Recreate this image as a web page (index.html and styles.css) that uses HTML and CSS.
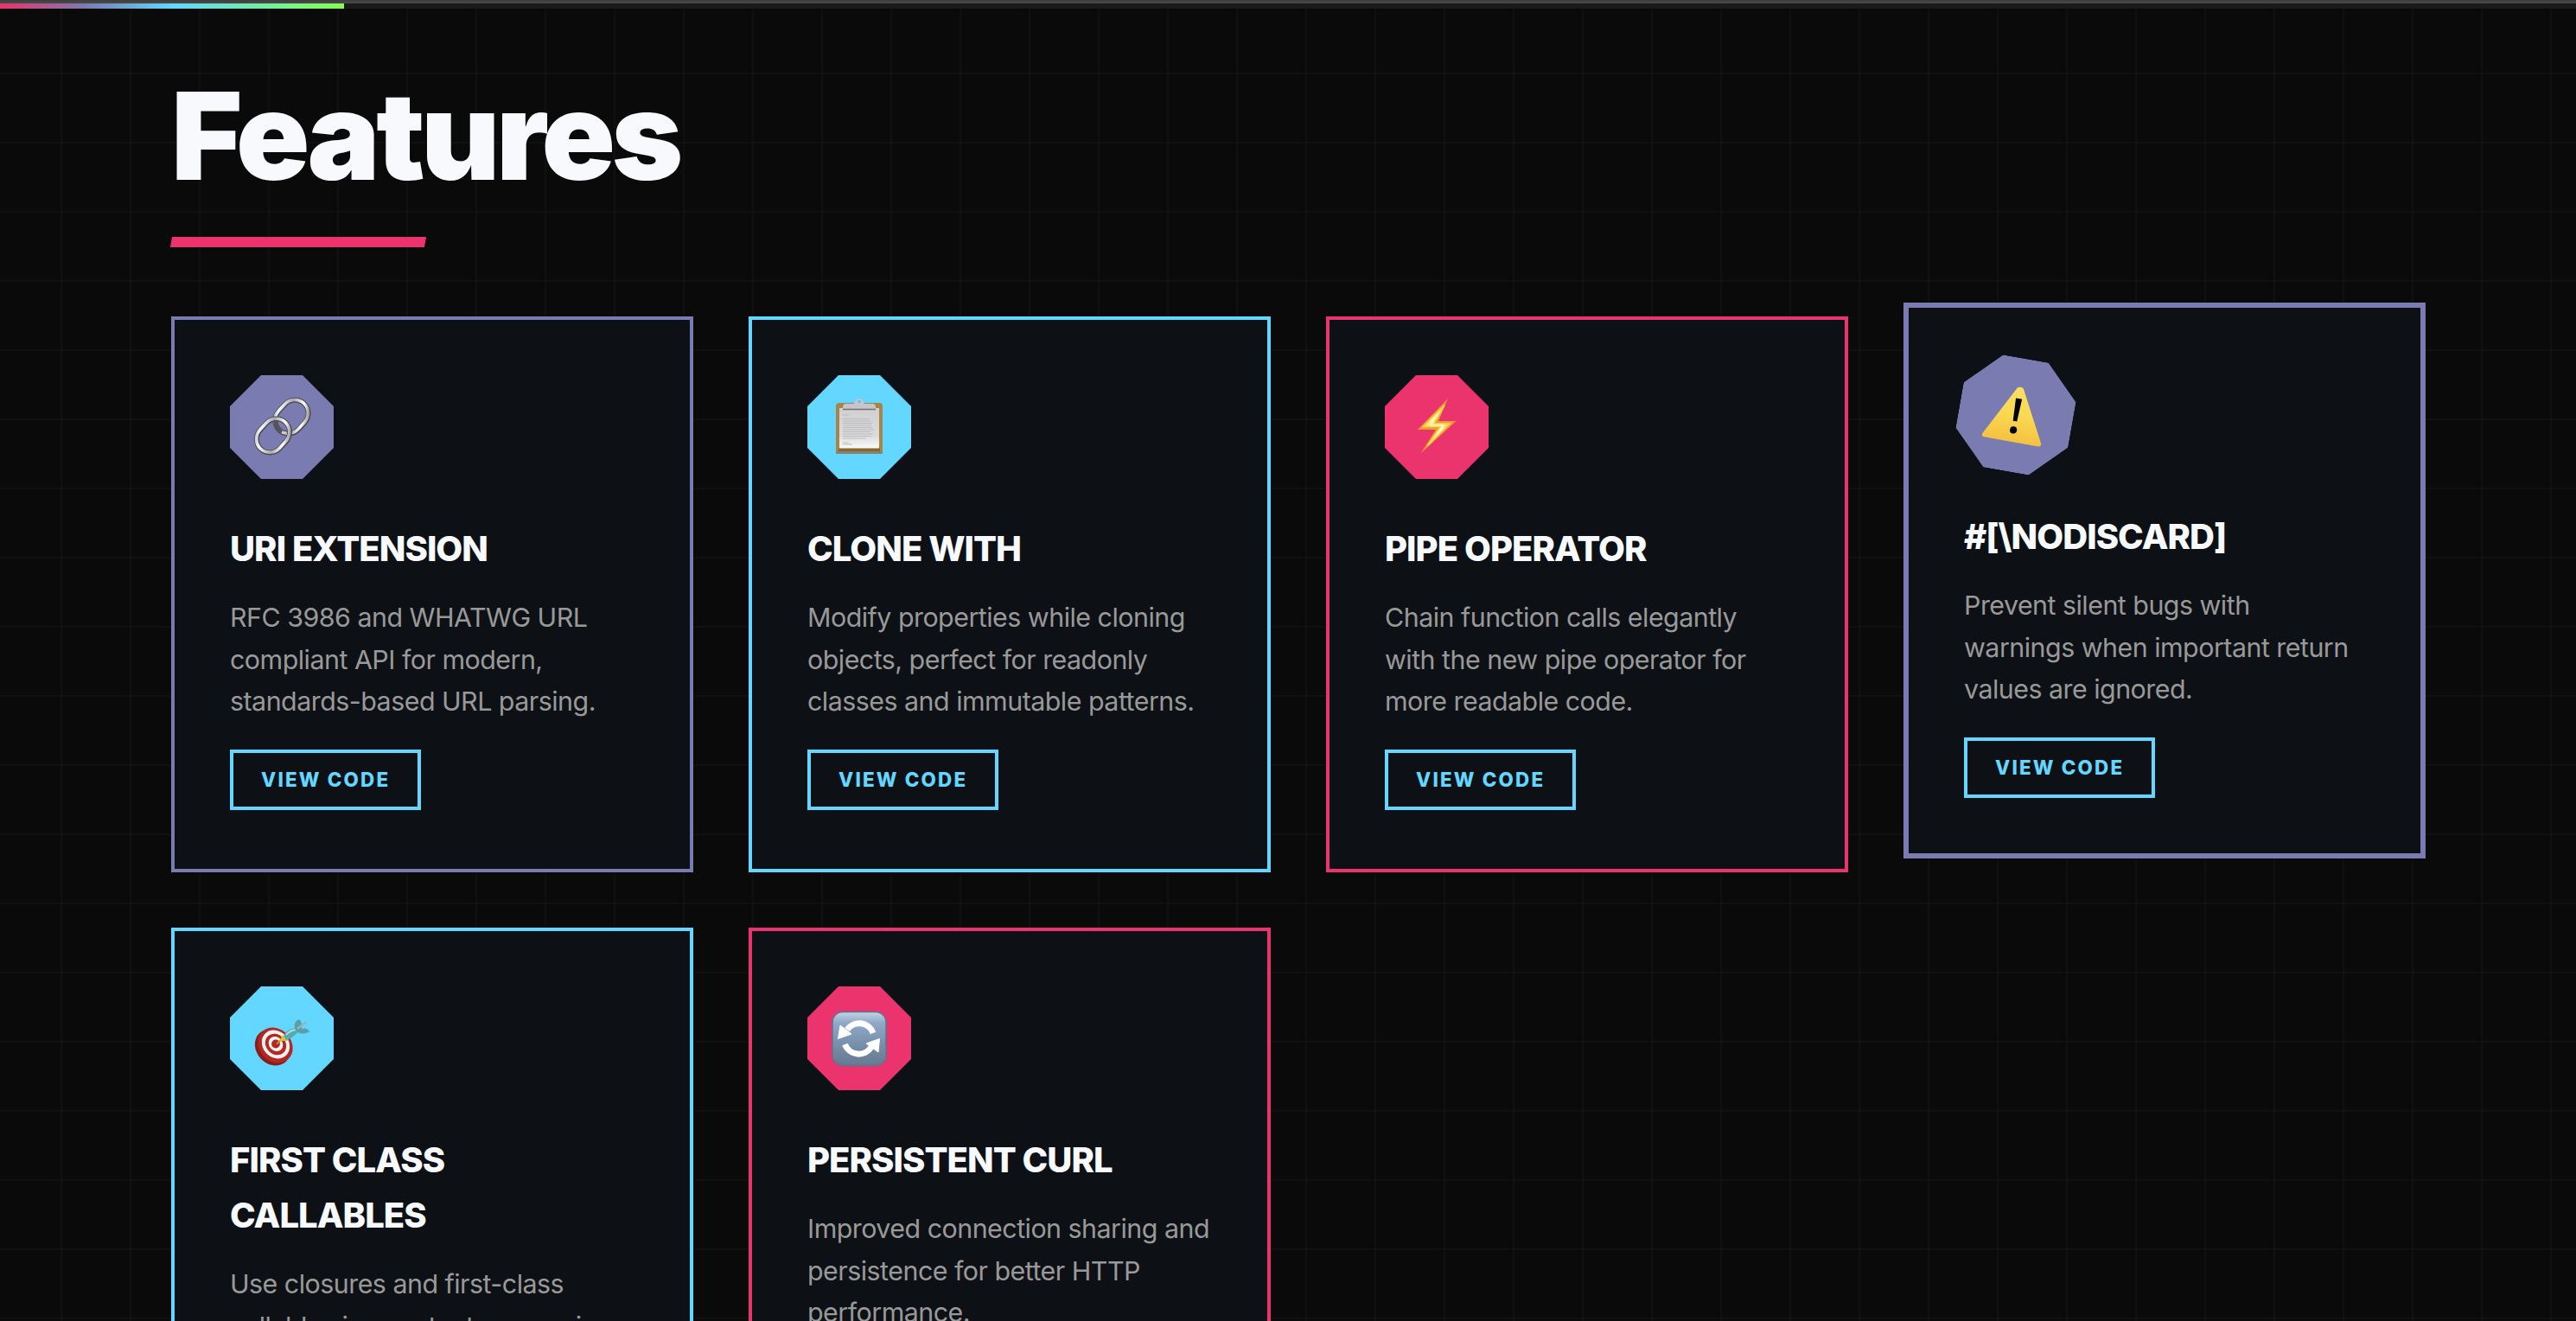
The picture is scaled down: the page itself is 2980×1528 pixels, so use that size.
FILE: index.html
```html
<!DOCTYPE html>
<html lang="en">
<head>
<meta charset="utf-8">
<title>Features</title>
<link rel="stylesheet" href="styles.css">
</head>
<body>
<div class="topline"></div>
<div class="progress"><div class="progress-fill"></div></div>
<main class="features">
  <h2 class="section-title">Features</h2>
  <div class="grid">
    <article class="card purple">
      <div class="icon">
        <svg viewBox="0 0 120 120">
          <defs><linearGradient id="metal" x1="0" y1="0" x2="1" y2="1"><stop offset="0" stop-color="#8f98a8"/><stop offset=".2" stop-color="#f8fbfd"/><stop offset=".5" stop-color="#a5a7ae"/><stop offset=".75" stop-color="#ffffff"/><stop offset="1" stop-color="#5a5459"/></linearGradient></defs>
          <g fill="none">
            <rect x="-21" y="-15.500" width="42" height="31" rx="16" transform="translate(71.500 48.200) rotate(-47)" stroke="#504c54" stroke-width="6"/>
            <rect x="-21" y="-15.500" width="42" height="31" rx="16" transform="translate(71.200 47.900) rotate(-47)" stroke="url(#metal)" stroke-width="3.600"/>
            <rect x="-21" y="-15.500" width="42" height="31" rx="16" transform="translate(50 70) rotate(-47)" stroke="#504c54" stroke-width="6"/>
            <rect x="-21" y="-15.500" width="42" height="31" rx="16" transform="translate(49.700 69.700) rotate(-47)" stroke="url(#metal)" stroke-width="3.600"/>
            <path d="M53 52C52 59 56 64 60 66" stroke="#55545d" stroke-width="5"/>
          </g>
        </svg>
      </div>
      <h3>URI Extension</h3>
      <p>RFC 3986 and WHATWG URL compliant API for modern, standards-based URL parsing.</p>
      <a class="btn">View Code</a>
    </article>
    <article class="card cyan">
      <div class="icon">
        <svg viewBox="0 0 120 120">
          <defs><linearGradient id="paper" x1="0" y1="0" x2="0" y2="1"><stop offset="0" stop-color="#cfcfd1"/><stop offset=".7" stop-color="#dcdcde"/><stop offset="1" stop-color="#fafafa"/></linearGradient></defs>
          <rect x="33" y="32" width="54" height="59" rx="4" fill="#a98447"/>
          <rect x="33" y="88" width="54" height="3" rx="1.500" fill="#86816f"/>
          <rect x="36" y="84" width="48" height="4" fill="#8b6730"/>
          <rect x="37" y="38" width="46" height="46.500" fill="url(#paper)"/>
          <path d="M41 40v-3q0-4 4-4h9q2-6 6-6t6 6h9q4 0 4 4v3z" fill="#c3c6d0"/>
          <circle cx="60" cy="30.500" r="1.800" fill="#7fb8d4"/>
          <path d="M41 39.500h38" stroke="#77706a" stroke-width="1.600"/>
          <g stroke="#bbbcbf" stroke-width="1.100"><path d="M41 46h7M41 50.500h31M41 53h32M41 55.500h34M41 58h33M41 60.500h34M41 63h36M41 65.500h32M41 68h35M41 70.500h33M41 73h26M41 78h7M41 80h11"/></g>
        </svg>
      </div>
      <h3>Clone With</h3>
      <p>Modify properties while cloning objects, perfect for readonly classes and immutable patterns.</p>
      <a class="btn">View Code</a>
    </article>
    <article class="card pink">
      <div class="icon">
        <svg viewBox="0 0 120 120">
          <defs><linearGradient id="bolt" x1="0" y1="0" x2="1" y2="0"><stop offset="0" stop-color="#f6c040"/><stop offset=".3" stop-color="#fff6a8"/><stop offset=".7" stop-color="#fffbd0"/><stop offset="1" stop-color="#f3b338"/></linearGradient></defs>
          <path d="M73 27 38 63h21L41.500 90.500 82.500 53H62z" fill="#eb9d2e"/>
          <path d="M69 35 44.500 59.500h20L49 82 75 56H56.500z" fill="url(#bolt)" stroke="#f8d44f" stroke-width="1.500"/>
        </svg>
      </div>
      <h3>Pipe Operator</h3>
      <p>Chain function calls elegantly with the new pipe operator for more readable code.</p>
      <a class="btn">View Code</a>
    </article>
    <article class="card purple active">
      <div class="icon">
        <svg viewBox="0 0 120 120">
          <defs><linearGradient id="warn" x1="0" y1="0" x2="0" y2="1"><stop offset="0" stop-color="#fbdf62"/><stop offset=".5" stop-color="#fad951"/><stop offset="1" stop-color="#f5c343"/></linearGradient></defs>
          <path d="M58.800 33 31 86H89L61.200 33z" fill="url(#warn)" stroke="url(#warn)" stroke-width="5" stroke-linejoin="round"/>
          <path d="M57 42.500h6.500l-1.200 24h-4.200z" fill="#000"/>
          <circle cx="60.200" cy="76" r="3.700" fill="#000"/>
        </svg>
      </div>
      <h3>#[\NoDiscard]</h3>
      <p>Prevent silent bugs with warnings when important return values are ignored.</p>
      <a class="btn">View Code</a>
    </article>
    <article class="card cyan">
      <div class="icon">
        <svg viewBox="0 0 120 120">
          <ellipse cx="49.500" cy="70.500" rx="19" ry="22.500" transform="rotate(-42 49.500 70.500)" fill="#8b1d18"/>
          <ellipse cx="52.500" cy="68" rx="18.500" ry="22" transform="rotate(-42 52.500 68)" fill="#b02822"/>
          <ellipse cx="53" cy="67" rx="15" ry="17.500" transform="rotate(-42 53 67)" fill="#f4f2f0"/>
          <ellipse cx="53" cy="67" rx="11.200" ry="13.200" transform="rotate(-42 53 67)" fill="#b62822"/>
          <ellipse cx="53" cy="66.500" rx="7.800" ry="9" transform="rotate(-42 53 66.500)" fill="#f6f4f2"/>
          <circle cx="53" cy="66.500" r="4.900" fill="#b02822"/>
          <path d="M54 66.500 62 59" stroke="#c99222" stroke-width="1.800"/>
          <path d="m59 62 2-4 4 4z" fill="#e2bd30" stroke="#e2bd30" stroke-width="2"/>
          <path d="M62 57q4-8 14-9l3 4q-6 8-14 10z" fill="#58aab0"/>
          <path d="M65 56q4-5 11-6" stroke="#a6dde0" stroke-width="2" fill="none"/>
          <path d="M75 49q-2-8 5-11 4 3 3 11 6-2 9 3-7 5-14 1z" fill="#5b9fa4"/>
          <path d="m78 49 10-8" stroke="#93b5ba" stroke-width="2.500"/>
        </svg>
      </div>
      <h3>First Class Callables</h3>
      <p>Use closures and first-class callables in constant expressions.</p>
      <a class="btn">View Code</a>
    </article>
    <article class="card pink">
      <div class="icon">
        <svg viewBox="0 0 120 120">
          <defs><linearGradient id="key" x1="0" y1="0" x2="0" y2="1"><stop offset="0" stop-color="#c5d5e3"/><stop offset=".2" stop-color="#8fa9c7"/><stop offset=".6" stop-color="#7890ab"/><stop offset="1" stop-color="#66798f"/></linearGradient></defs>
          <rect x="29" y="29.500" width="62" height="62" rx="12" fill="url(#key)" stroke="#5d7690" stroke-width="1.500"/>
          <g fill="none" stroke="#fff" stroke-width="7"><path d="M76 54A17 17 0 0 0 46 50"/><path d="M43.500 67A17 17 0 0 0 74 70"/></g>
          <path d="M38 45 35.500 60.500 51 55zM82 76 83.500 60.500 68 66z" fill="#fff" stroke="#fff" stroke-linejoin="round"/>
        </svg>
      </div>
      <h3>Persistent cURL</h3>
      <p>Improved connection sharing and persistence for better HTTP performance.</p>
      <a class="btn">View Code</a>
    </article>
  </div>
</main>
</body>
</html>
```
FILE: styles.css
```css
* { box-sizing: border-box; margin: 0; }
html { height: 1528px; overflow: hidden; background: #0a0a0a; }
body {
  height: 1528px;
  overflow: hidden;
  font-family: Inter, "Liberation Sans", sans-serif;
  font-size: 32px;
  line-height: 1.6;
  color: #f8f9fc;
  background:
    repeating-linear-gradient(90deg, transparent 0 70px, rgba(255, 255, 255, .025) 70px 72px, transparent 72px 80px),
    linear-gradient(rgba(255, 255, 255, .025) 2px, transparent 2px) 0 4px / 100% 80px,
    #0a0a0a;
}
.topline { height: 4px; background: linear-gradient(#404040 50%, #484848 50%); }
.progress { height: 6px; background: #1a1a1a; }
.progress-fill {
  width: 398px;
  height: 6px;
  background: linear-gradient(90deg, #eb336e, #7a7bb0 25%, #63d7ff 50%, #82ff50);
}
.features { padding: 70px 174px 0 198px; }
.section-title {
  position: relative;
  height: 286px;
  font-size: 140.800px;
  font-weight: 900;
  line-height: 154px;
  letter-spacing: -.031em;
}
.section-title::after {
  content: "";
  position: absolute;
  left: 0;
  top: 194px;
  width: 294px;
  height: 12px;
  background: #ed336e;
  transform: skewX(-10deg);
}
.grid {
  display: grid;
  grid-template-columns: repeat(4, 604px);
  grid-auto-rows: minmax(643px, auto);
  gap: 64px;
}
.card { padding: 64px; background: #0d1015; border: 4px solid var(--accent); }
.purple { --accent: #7a7bb0; }
.cyan { --accent: #63d7ff; }
.pink { --accent: #eb336e; }
.active { border-width: 6px; transform: translateY(-16px); }
.icon {
  width: 120px;
  height: 120px;
  margin-bottom: 49px;
  background: var(--accent);
  clip-path: polygon(30% 0, 70% 0, 100% 30%, 100% 70%, 70% 100%, 30% 100%, 0 70%, 0 30%);
}
.icon svg { display: block; width: 120px; height: 120px; }
.active .icon { transform: rotate(10deg) scale(1.1); }
.card h3 {
  margin-bottom: 23px;
  font-size: 40px;
  font-weight: 800;
  letter-spacing: -.024em;
  text-transform: uppercase;
}
.card p { margin-bottom: 31px; font-size: 30.400px; letter-spacing: -.017em; color: #999; }
.btn {
  display: inline-block;
  width: 221px;
  height: 70px;
  padding: 0 32px;
  border: 4px solid #63d7ff;
  color: #63d7ff;
  font-size: 22.400px;
  font-weight: 800;
  line-height: 62px;
  letter-spacing: .097em;
  white-space: nowrap;
  text-transform: uppercase;
}
```
